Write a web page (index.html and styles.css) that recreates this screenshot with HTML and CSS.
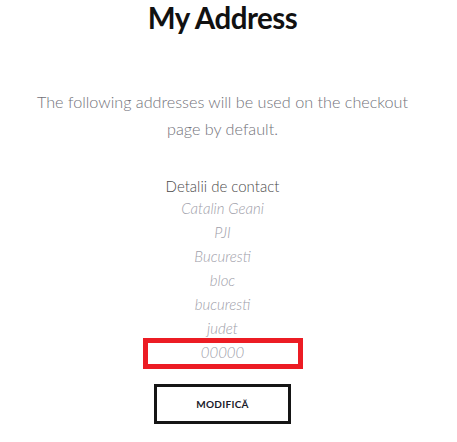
FILE: index.html
```html
<!DOCTYPE html>
<html lang="ro">
<head>
<meta charset="utf-8">
<title>My Address</title>
<link rel="stylesheet" href="styles.css">
</head>
<body>
<main class="page">
  <h1 class="title">My Address</h1>
  <p class="intro">The following addresses will be used on the checkout page by default.</p>
  <section class="address">
    <h3 class="address-head">Detalii de contact</h3>
    <address class="address-lines">
      <span class="line">Catalin Geani</span>
      <span class="line">PJI</span>
      <span class="line">Bucuresti</span>
      <span class="line">bloc</span>
      <span class="line">bucuresti</span>
      <span class="line">judet</span>
      <span class="line line-marked">00000</span>
    </address>
    <a class="btn" href="#">MODIFICĂ</a>
  </section>
</main>
</body>
</html>
```

FILE: styles.css
```css
* { box-sizing: border-box; }
html, body { margin: 0; padding: 0; background: #fff; }
body { font-family: Lato, "Open Sans", sans-serif; }
.page {
  width: 445px;
  display: flex;
  flex-direction: column;
  align-items: center;
  text-align: center;
}
.title {
  margin: 0;
  padding-top: 0;
  font-size: 29.5px;
  line-height: 36px;
  font-weight: 700;
  color: #111;
  letter-spacing: -0.5px;
}
.intro {
  margin: 52px 0 0;
  width: 390px;
  font-size: 16.2px;
  line-height: 27px;
  font-weight: 300;
  color: #72727a;
}
.address {
  margin-top: 36px;
  display: flex;
  flex-direction: column;
  align-items: center;
}
.address-head {
  margin: 0;
  font-size: 15px;
  line-height: 17px;
  font-weight: 300;
  color: #4a4a4a;
}
.address-lines {
  margin-top: 1px;
  display: flex;
  flex-direction: column;
  align-items: center;
  font-style: italic;
  font-weight: 300;
  font-size: 15px;
  line-height: 24px;
  color: #a0a0aa;
}
.line-marked {
  position: relative;
  width: 150px;
}
.line-marked::after {
  content: "";
  position: absolute;
  left: 0;
  right: 0;
  top: 3px;
  height: 21px;
  outline: 5px solid #ec1c24;
}
.btn {
  margin-top: 20px;
  width: 137px;
  height: 40px;
  border: 3px solid #151515;
  display: flex;
  align-items: center;
  justify-content: center;
  font-size: 10px;
  font-weight: 700;
  letter-spacing: 0.3px;
  color: #1a1a2a;
  text-decoration: none;
}
```
